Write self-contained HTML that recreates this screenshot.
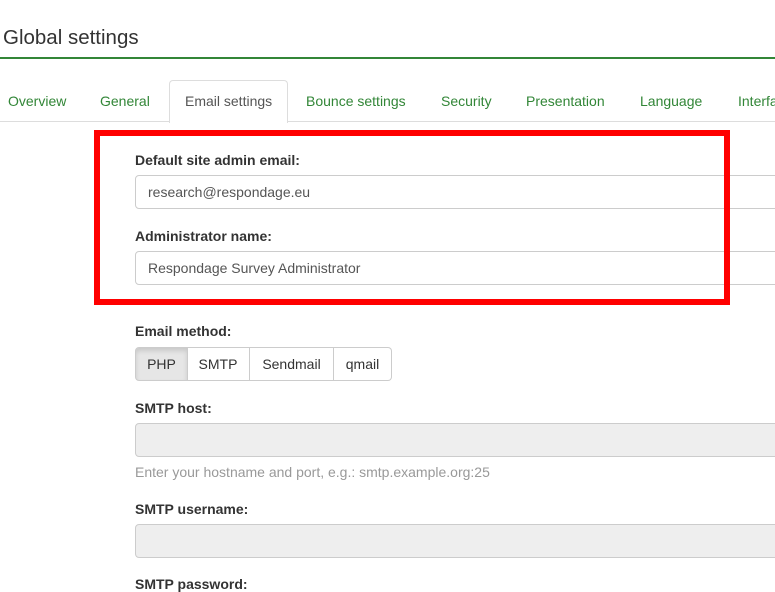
<!DOCTYPE html>
<html><head><style>
body{margin:0;width:775px;height:590px;overflow:hidden;background:#fff;font-family:"Liberation Sans",Arial,sans-serif;position:relative;color:#333}
.a{position:absolute}
.t{font-size:14px;color:#328637;top:93px}
.lab{left:135px;font-size:14px;font-weight:bold;color:#333}
.inp{left:135px;width:700px;height:32px;border:1px solid #ccc;border-radius:4px;box-sizing:content-box;font-size:14px;color:#555;line-height:32px;padding-left:12px}
.g{background:#eee}
.btn{top:347px;height:32px;border:1px solid #ccc;font-size:14px;line-height:32px;text-align:center;color:#333;box-sizing:content-box}
</style></head><body>
<div class="a" style="left:3px;top:26px;font-size:20.5px;color:#333">Global settings</div>
<div class="a" style="left:0;top:57px;width:775px;height:2px;background:#328637"></div>
<div class="a" style="left:0;top:121px;width:775px;height:1px;background:#ddd"></div>
<div class="a" style="left:169px;top:80px;width:117px;height:42px;border:1px solid #ddd;border-bottom:none;border-radius:4px 4px 0 0;background:#fff"></div>
<div class="a t" style="left:8px">Overview</div>
<div class="a t" style="left:100px">General</div>
<div class="a t" style="left:185px;color:#555">Email settings</div>
<div class="a t" style="left:306px">Bounce settings</div>
<div class="a t" style="left:441px">Security</div>
<div class="a t" style="left:526px">Presentation</div>
<div class="a t" style="left:640px">Language</div>
<div class="a t" style="left:738px">Interface</div>

<div class="a lab" style="top:152px">Default site admin email:</div>
<div class="a inp" style="top:175px">research@respondage.eu</div>
<div class="a lab" style="top:228px">Administrator name:</div>
<div class="a inp" style="top:251px">Respondage Survey Administrator</div>
<div class="a" style="left:94px;top:130px;width:624px;height:163px;border:6px solid #f00"></div>

<div class="a lab" style="top:323px">Email method:</div>
<div class="a btn" style="left:135px;width:51px;background:#e6e6e6;border-radius:4px 0 0 4px;box-shadow:inset 0 3px 5px rgba(0,0,0,.125)">PHP</div>
<div class="a btn" style="left:187px;width:62px;border-left:none">SMTP</div>
<div class="a btn" style="left:250px;width:83px;border-left:none">Sendmail</div>
<div class="a btn" style="left:334px;width:57px;border-left:none;border-radius:0 4px 4px 0">qmail</div>

<div class="a lab" style="top:400px">SMTP host:</div>
<div class="a inp g" style="top:423px"></div>
<div class="a" style="left:135px;top:464px;font-size:14px;color:#999">Enter your hostname and port, e.g.: smtp.example.org:25</div>
<div class="a lab" style="top:501px">SMTP username:</div>
<div class="a inp g" style="top:524px"></div>
<div class="a lab" style="top:576px">SMTP password:</div>
</body></html>
